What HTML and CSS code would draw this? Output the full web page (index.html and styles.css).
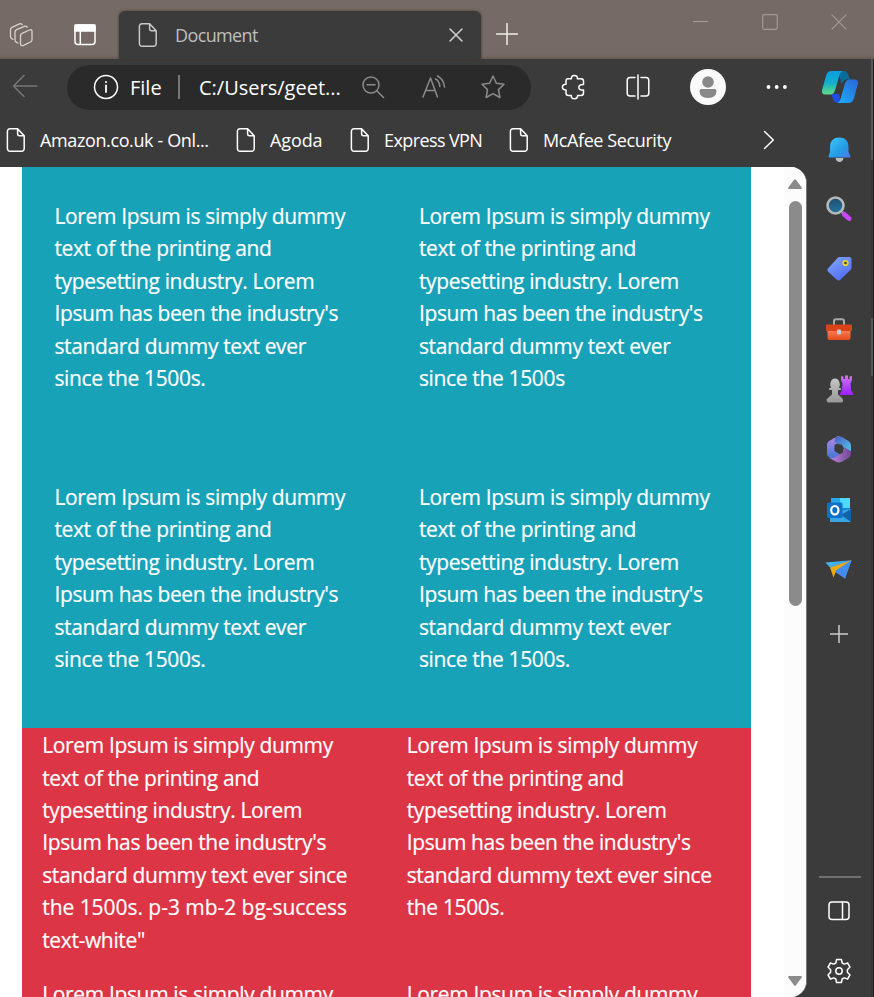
FILE: index.html
```html
<!DOCTYPE html>
<html lang="en">
<head>
<meta charset="utf-8">
<title>Document</title>
<link rel="stylesheet" href="styles.css">
</head>
<body>
<svg class="defs" width="0" height="0">
  <defs>
    <symbol id="page" viewBox="0 0 20 26"><path d="M4 1.8h7.6l6.6 7v12.7a2.6 2.6 0 0 1-2.6 2.7H4a2.6 2.6 0 0 1-2.6-2.7v-17A2.6 2.6 0 0 1 4 1.8zM11.6 2v4.700a2 2 0 0 0 2 2h4.400"/></symbol>
    <linearGradient id="cop1" x1="0" y1="0" x2="0" y2="1"><stop offset="0" stop-color="#0a9fe5"/><stop offset=".5" stop-color="#12aecb"/><stop offset="1" stop-color="#62dc83"/></linearGradient>
    <linearGradient id="cop2" x1="1" y1="0" x2="0" y2="1"><stop offset="0" stop-color="#2d63d4"/><stop offset="1" stop-color="#18b1ff"/></linearGradient>
    <linearGradient id="bell" x1="0" y1="0" x2="1" y2="1"><stop offset="0" stop-color="#43c8fa"/><stop offset=".6" stop-color="#229be4"/><stop offset="1" stop-color="#5478ed"/></linearGradient>
    <linearGradient id="lens" x1="0" y1="0" x2="0" y2="1"><stop offset="0" stop-color="#1b4d72"/><stop offset="1" stop-color="#28769c"/></linearGradient>
    <linearGradient id="tag" x1="0" y1="0" x2=".6" y2="1"><stop offset="0" stop-color="#80acfc"/><stop offset="1" stop-color="#536cf7"/></linearGradient>
    <linearGradient id="box" x1="0" y1="0" x2="0" y2="1"><stop offset="0" stop-color="#f98a62"/><stop offset="1" stop-color="#e44a1d"/></linearGradient>
    <linearGradient id="pawn" x1="0" y1="0" x2="0" y2="1"><stop offset="0" stop-color="#c4c4c4"/><stop offset="1" stop-color="#999"/></linearGradient>
    <linearGradient id="rook" x1="0" y1="0" x2="0" y2="1"><stop offset="0" stop-color="#cc79ee"/><stop offset="1" stop-color="#9c1eff"/></linearGradient>
    <linearGradient id="m1" x1="0" y1="0" x2="0" y2="1"><stop offset="0" stop-color="#b98be5"/><stop offset="1" stop-color="#3974d4"/></linearGradient>
    <linearGradient id="m2" x1="0" y1="0" x2="1" y2="1"><stop offset="0" stop-color="#4c5dc0"/><stop offset="1" stop-color="#50cdf1"/></linearGradient>
    <linearGradient id="m3" x1="0" y1="0" x2="1" y2="0"><stop offset="0" stop-color="#c18ae2"/><stop offset="1" stop-color="#6f4594"/></linearGradient>
    <linearGradient id="plane" x1="0" y1="0" x2="1" y2="1"><stop offset="0" stop-color="#42c5ed"/><stop offset="1" stop-color="#4378eb"/></linearGradient>
  </defs>
</svg>
<div class="window">
  <header class="titlebar">
    <svg class="line ws" viewBox="0 0 28 28"><path d="M11.500 13.500Q11.500 12 13 11.300L20.500 8q2.500-1 2.500 1.200v8.500q0 1.600-1.500 2.300l-7 3.300q-3 1-3-1.800zM9 21l-1.500-.7q-1.500-.7-1.500-2.400v-8q0-1.500 1.500-2.200L15.500 4.300q1.800-.6 2.700.8M4 17.300l-1-.5q-1.500-.7-1.500-2.400V7.500Q1.500 6 3 5.300L10.500 1.800q1.700-.6 2.700.7"/></svg>
    <svg class="line tabmenu" viewBox="0 0 24 24"><rect x="2" y="2" width="20" height="19.500" rx="3"/><path d="M2 2h20v6H2z" fill="#fff"/><path d="M7.300 8v13"/></svg>
    <div class="tab">
      <svg class="line page"><use href="#page"/></svg>
      <span class="t tab-title">Document</span>
      <svg class="line close" viewBox="0 0 14 14"><path d="M1 1l12 12M13 1L1 13"/></svg>
    </div>
    <svg class="line newtab" viewBox="0 0 22 22"><path d="M11 .5v21M.5 11h21"/></svg>
    <div class="controls">
      <svg viewBox="0 0 16 16"><path d="M0 7.500h15"/></svg>
      <svg viewBox="0 0 16 16"><rect x=".7" y=".7" width="14.600" height="14.600" rx="1.500"/></svg>
      <svg viewBox="0 0 16 16"><path d="M.7.7l14.600 14.600M15.300.7L.7 15.300"/></svg>
    </div>
  </header>
  <div class="body">
    <main class="main">
      <div class="toolbar">
        <svg class="line back" viewBox="0 0 26 24"><path d="M25 12H1.500M12 1.500L1.500 12 12 22.500"/></svg>
        <div class="address">
          <svg class="line info" viewBox="0 0 26 26"><circle cx="13" cy="13" r="11.500"/><path d="M13 11.500v6.500M13 7.800v.4" stroke-width="1.800"/></svg>
          <span class="t file">File</span><i class="sep"></i><span class="t url">C:/Users/geet...</span>
          <svg class="line dim zoomout" viewBox="0 0 24 24"><circle cx="10" cy="10" r="8"/><path d="M16 16l6.500 6.500M6 9.800h8"/></svg>
          <svg class="line dim read" viewBox="0 0 26 24"><path d="M2 22L9.500 3l7 19M4.700 15.500h9.500M14.500 4q4 2 4.300 7.500M16.500 1q6.300 3.300 7 11"/></svg>
          <svg class="line dim star" viewBox="0 0 26 26"><path d="M13 2l3.400 7.200 7.600 1-5.500 5.400 1.400 7.900-6.900-3.800-6.900 3.800 1.400-7.900L2 10.200l7.600-1z"/></svg>
        </div>
        <svg class="line puzzle" viewBox="0 0 26 26"><path d="M7 4.800h3.400q-.2-3.300 3-3.300t3 3.300H20q2.500 0 2.500 2.500v3.200q-4.700-.2-4.700 2.800t4.700 2.800V19q0 2.500-2.500 2.500h-3.400q.2 3.200-3.200 3.200t-3.100-3.200H7.500Q5 21.500 5 19v-3.100q-3.600-.1-3.600-2.900T5 10.200V7q0-2.200 2-2.200z"/></svg>
        <svg class="line split" viewBox="0 0 24 26"><path d="M12 1v24M9 3.500H4Q1.200 3.500 1.200 6.500v12.500q0 3 2.800 3h5M15 3.500h5q2.800 0 2.800 3v12.500q0 3-2.800 3h-5"/></svg>
        <svg class="avatar" viewBox="0 0 36 36"><circle cx="18" cy="18" r="18" fill="#fafafa"/><circle cx="18" cy="13" r="5.800" fill="#888"/><path d="M11.500 20h13q2 0 2 2 0 7-8.500 7t-8.500-7q0-2 2-2z" fill="#888"/></svg>
        <svg class="dots" viewBox="0 0 22 4"><g fill="#fff"><circle cx="2.500" cy="2" r="1.900"/><circle cx="10.700" cy="2" r="1.900"/><circle cx="18.900" cy="2" r="1.900"/></g></svg>
      </div>
      <nav class="bookmarks">
        <svg class="line page b1"><use href="#page"/></svg><span class="t n1">Amazon.co.uk - Onl...</span>
        <svg class="line page"><use href="#page"/></svg><span class="t n2">Agoda</span>
        <svg class="line page"><use href="#page"/></svg><span class="t n3">Express VPN</span>
        <svg class="line page"><use href="#page"/></svg><span class="t n4">McAfee Security</span>
        <svg class="line chev" viewBox="0 0 12 20"><path d="M1.500 1.500L10.300 10 1.500 18.500"/></svg>
      </nav>
      <section class="viewport">
        <div class="content">
          <div class="info-grid">
            <p>Lorem Ipsum is simply dummy<br>text of the printing and<br>typesetting industry. Lorem<br>Ipsum has been the industry's<br>standard dummy text ever<br>since the 1500s.</p>
            <p>Lorem Ipsum is simply dummy<br>text of the printing and<br>typesetting industry. Lorem<br>Ipsum has been the industry's<br>standard dummy text ever<br>since the 1500s</p>
            <p>Lorem Ipsum is simply dummy<br>text of the printing and<br>typesetting industry. Lorem<br>Ipsum has been the industry's<br>standard dummy text ever<br>since the 1500s.</p>
            <p>Lorem Ipsum is simply dummy<br>text of the printing and<br>typesetting industry. Lorem<br>Ipsum has been the industry's<br>standard dummy text ever<br>since the 1500s.</p>
          </div>
          <div class="danger-grid">
            <p>Lorem Ipsum is simply dummy<br>text of the printing and<br>typesetting industry. Lorem<br>Ipsum has been the industry's<br>standard dummy text ever since<br><span class="wide">the 1500s. p-3 mb-2 bg-success</span><br>text-white"</p>
            <p>Lorem Ipsum is simply dummy<br>text of the printing and<br>typesetting industry. Lorem<br>Ipsum has been the industry's<br>standard dummy text ever since<br>the 1500s.</p>
            <p>Lorem Ipsum is simply dummy</p>
            <p>Lorem Ipsum is simply dummy</p>
          </div>
        </div>
        <div class="scroll">
          <svg viewBox="0 0 14 10"><path d="M6 .8q1-1.100 2 0l5.700 7.700q.5 1.500-1 1.500H1.300Q-.2 10 .3 8.500z"/></svg>
          <div class="thumb"></div>
          <svg viewBox="0 0 14 10"><path d="M6 9.200q1 1.100 2 0l5.700-7.700Q14.200 0 12.700 0H1.300Q-.2 0 .3 1.500z"/></svg>
        </div>
      </section>
    </main>
    <aside class="sidebar">
      <svg class="copilot" viewBox="0 0 36 32"><path d="M17 0h5q3 0 4 3l2 5.500h-5L19 13z" fill="#086d99"/><path d="M9 23h8l2 9h-3q-4 0-5-4z" fill="#214ee0"/><path d="M9.500 0H21q-2.500.5-3.500 4l-4.500 15.500q-1 4-5 4H3q-4 0-2.800-5L4 5Q5.500 0 9.500 0z" fill="url(#cop1)"/><path d="M26.500 32H15q2.500-.5 3.500-4L23 12.500q1-4 5-4h5q4 0 2.800 5L32 27q-1.500 5-5.500 5z" fill="url(#cop2)"/></svg>
      <div class="cell"><svg viewBox="0 0 28 28"><path d="M10.500 23h8q-.8 4-4 4t-4-4z" fill="#b8bcc4"/><path d="M5 12q0-9.500 9.300-9.500T23.500 12v5l2 4.500q0 1-1 1H4.500q-1 0-1-1L5 17z" fill="url(#bell)"/></svg></div>
      <div class="cell up"><svg viewBox="0 0 28 28"><path d="M17 18l3 3" stroke="#999" stroke-width="3"/><path d="M19.500 20.500l4.500 4" stroke="#c845fa" stroke-width="5" stroke-linecap="round"/><circle cx="10.500" cy="11.500" r="8" fill="url(#lens)" stroke="#b8b8b8" stroke-width="2.600"/></svg></div>
      <div class="cell"><svg viewBox="0 0 28 28"><path d="M15 2h9q2.500 0 2.500 2.500v8q0 1.500-1 2.500L15 25q-1.500 1.200-3 0l-9-8.500q-1.500-1.500 0-3L12.500 3q1-1 2.500-1z" fill="url(#tag)"/><circle cx="20.500" cy="8" r="2.200" fill="#3b3c50" stroke="#f6d01f" stroke-width="1.800"/></svg></div>
      <div class="cell down"><svg viewBox="0 0 28 28"><path d="M9 8V4q0-1.700 2-1.700h6q2 0 2 1.700v4" fill="none" stroke="#aaa" stroke-width="2"/><path d="M2.500 12h23v9q0 2-2 2h-19q-2 0-2-2z" fill="url(#box)"/><path d="M2 7.500h24q1 0 1 1V14H1V8.500q0-1 1-1z" fill="#d94317"/><rect x="12" y="12.500" width="4" height="5" rx="1" fill="#c9cdd0"/></svg></div>
      <div class="cell"><svg viewBox="0 0 28 28"><path d="M16 1l2.500.7V4H20V.5h3V4h1.500V1.500L27 1v4l-1.500 3.500.5 7L28 18v2H14.500l2.500-5 .5-6.500L16 5z" fill="url(#rook)"/><path d="M3 23l4-3.500V15H4.500q-1.300-1 0-2H6Q4.500 10.500 5.500 7.500 6.500 3.500 10 3.500t4.500 4q1 3-.5 5.500h1.500q1.300 1 0 2H13v4.500l4 3.500 1 1.500q.5 3-1.500 3h-13q-2 0-2-3z" fill="url(#pawn)"/></svg></div>
      <div class="cell"><svg viewBox="0 0 28 28"><path d="M13 1L5 5.500Q2 7 2 10v9q0 2 2 3.300L9 25l7-5-6.500-4v-6L20 4z" fill="url(#m1)"/><path d="M10.500 2.500q3.500-2.500 7 0l6 3.500q2.500 1.500 2.500 4.500v8L18 16v-4.500L9.500 7z" fill="url(#m2)"/><path d="M26 16v3.500q0 2-2 3.300l-7 4q-3 1.500-6 0l-7-4q3.500 1 6-.6L18.500 17v-5z" fill="url(#m3)"/><path d="M12 9.500h4.500l2.500 4-2.500 4.500H12L9.500 13.500z" fill="#3b3b3b"/></svg></div>
      <div class="cell down"><svg viewBox="0 0 28 28"><path d="M6 1h19v21H6z" fill="#1686d8"/><path d="M15 1h10v10H15z" fill="#50d9ff"/><path d="M6 1h9v5H6z" fill="#28a8ea"/><path d="M5 25V15l21-3v13z" fill="#37a5e3"/><path d="M26 12v13l-10-7z" fill="#1262a5"/><rect x="2" y="5.500" width="15.500" height="15.500" rx="1.500" fill="#0f70c9"/><ellipse cx="9.800" cy="13.200" rx="3.600" ry="4.200" fill="none" stroke="#fff" stroke-width="2.200"/></svg></div>
      <div class="cell down"><svg viewBox="0 0 28 28"><path d="M.5 5.500l26-2.300L20 21.500 7.500 13z" fill="url(#plane)"/><path d="M26.500 3.200L5 10.500l3.500 10 2-5z" fill="#edaa10"/><path d="M26.500 3.200L10 14l10 7.500z" fill="#438ff1"/></svg></div>
      <svg class="line add" viewBox="0 0 18 18"><path d="M9 0v18M0 9h18"/></svg>
      <i class="rule"></i>
      <svg class="line panel" viewBox="0 0 22 20"><rect x="1" y="1" width="20" height="17.500" rx="3"/><path d="M14.500 1v17"/></svg>
      <svg class="line gear" viewBox="0 0 26 26"><path d="M10.600 1.500h4.800l.8 3.500 2 1.100 3.400-1.100 2.400 4.100-2.600 2.700v2.400l2.600 2.700-2.400 4.100-3.400-1.100-2 1.100-.8 3.500h-4.800L9.800 21l-2-1.100L4.400 21 2 16.900l2.600-2.700v-2.400L2 9.100 4.400 5l3.400 1.100 2-1.100z"/><circle cx="13" cy="13" r="3.200"/></svg>
    </aside>
    <div class="edge"></div>
  </div>
</div>
</body>
</html>
```

FILE: styles.css
```css
* { box-sizing: border-box; }
body { margin: 0; background: #3b3b3b; color: #fff; font-family: "Open Sans", "Noto Sans", sans-serif; overflow: hidden; }
svg { display: block; flex: none; }
.defs { position: absolute; }
.line { fill: none; stroke: #fff; stroke-width: 1.5; stroke-linejoin: round; stroke-linecap: round; }
.t { display: block; white-space: nowrap; flex: none; }
.window { width: 874px; height: 997px; display: flex; flex-direction: column; overflow: hidden; }

.titlebar { height: 59px; flex: none; display: flex; align-items: flex-start; background: linear-gradient(#756a65 55px, #665a53 59px); }
.ws { width: 28px; height: 28px; margin: 22px 0 0 9px; stroke: #d8d2cf; stroke-width: 1.3; }
.tabmenu { width: 24px; height: 24px; margin: 23px 0 0 36px; }
.tab { width: 362px; height: 48px; margin: 11px 0 0 22px; display: flex; align-items: center; background: #3b3b3b; border-radius: 6px 6px 0 0; box-shadow: 0 0 3px #41352e; }
.page { width: 20px; height: 26px; }
.tab .page { margin-left: 19px; stroke: #c9c9c9; }
.tab-title { width: 83px; margin: -1px 0 0 17px; font-size: 18px; color: #bfbfbf; letter-spacing: -.62px; }
.close { width: 14px; height: 14px; margin-left: 191px; stroke: #d0d0d0; }
.newtab { width: 22px; height: 22px; margin: 23px 0 0 15px; stroke: #f1eeea; }
.controls { display: flex; gap: 53px; margin: 14px 0 0 175px; fill: none; stroke: #a49a96; stroke-width: 1.2; }
.controls svg { width: 16px; height: 16px; }

.body { flex: 1; display: flex; min-height: 0; }
.main { width: 807px; display: flex; flex-direction: column; }
.toolbar { height: 56px; display: flex; align-items: center; flex: none; }
.back { width: 26px; height: 24px; margin-left: 12px; margin-top: -2px; stroke: #777; }
.address { width: 464px; height: 45px; margin-left: 29px; display: flex; align-items: center; background: #2a2a2a; border-radius: 23px; }
.info { width: 26px; height: 26px; margin-left: 26px; }
.file { width: 31px; margin-left: 11px; font-size: 20px; }
.sep { width: 2px; height: 24px; margin-left: 17px; background: #777; }
.url { width: 142px; margin-left: 19px; font-size: 20px; }
.dim { stroke: #8b8b8b; }
.zoomout { width: 24px; height: 24px; margin-left: 20px; }
.read { width: 26px; height: 24px; margin-left: 36px; }
.star { width: 26px; height: 26px; margin-left: 33px; }
.puzzle { width: 26px; height: 26px; margin-left: 30px; }
.split { width: 24px; height: 26px; margin-left: 39px; }
.avatar { width: 36px; height: 36px; margin-left: 40px; }
.dots { width: 22px; height: 4px; margin-left: 40px; }

.bookmarks { height: 52px; flex: none; display: flex; align-items: center; padding-bottom: 2px; font-size: 18px; }
.b1 { margin-left: 6px; }
.bookmarks .t { margin: -1px 0 0 14px; }
.bookmarks .n1 { width: 170px; margin-right: 26px; letter-spacing: -.38px; }
.bookmarks .n2 { width: 53px; margin-right: 27px; letter-spacing: -.1px; }
.bookmarks .n3 { width: 98px; margin-right: 27px; letter-spacing: -.6px; }
.bookmarks .n4 { width: 128px; letter-spacing: -.4px; }
.chev { width: 12px; height: 20px; margin-left: 92px; }

.viewport { height: 830px; flex: none; display: flex; justify-content: space-between; background: #fff; border-radius: 0 16px 16px 0; overflow: hidden; padding-left: 22px; border-right: 1px solid #777; }
.content { width: 729px; overflow: hidden; font-size: 21px; line-height: 32.4px; letter-spacing: -.35px; -webkit-text-stroke: .2px #fff; }
.content p { margin: 0; white-space: nowrap; }
.wide { letter-spacing: -.04px; }
.info-grid { height: 560.5px; display: grid; grid-template-columns: 1fr 1fr; grid-template-rows: 281px 279.5px; background: #17a2b8; }
.info-grid p { padding: 33px 0 0 32.4px; }
.danger-grid { height: 320px; display: grid; grid-template-columns: 1fr 1fr; grid-template-rows: 248.5px auto; padding-top: 1.7px; background: #dc3545; }
.danger-grid p { padding-left: 20.2px; }
.scroll { width: 22px; display: flex; flex-direction: column; align-items: center; padding: 12px 0 11px; background: #fcfcfc; fill: #8b8b8b; }
.scroll svg { width: 14px; height: 10px; }
.thumb { width: 13px; height: 405px; margin: 12px 0 auto; background: #8b8b8b; border-radius: 7px; }

.sidebar { width: 64px; display: flex; flex-direction: column; align-items: center; }
.copilot { width: 36px; height: 32px; margin: 12px 0 16px 2px; }
.cell { height: 60px; flex: none; display: flex; align-items: center; }
.cell svg { width: 28px; height: 28px; }
.up { padding-bottom: 3px; }
.down { padding-top: 4px; }
.add { width: 18px; height: 18px; margin-top: 26px; stroke: #ccc; }
.rule { width: 42px; height: 2px; margin-top: 233px; margin-left: 2px; background: #707070; }
.panel { width: 22px; height: 20px; margin-top: 23px; }
.gear { width: 26px; height: 26px; margin-top: 37px; }
.edge { width: 3px; border-right: 1px solid #1d1d1d; background: linear-gradient(#55575b 101px, #363636 101px 259px, #50585e 259px 317px, #363636 317px); }
```
